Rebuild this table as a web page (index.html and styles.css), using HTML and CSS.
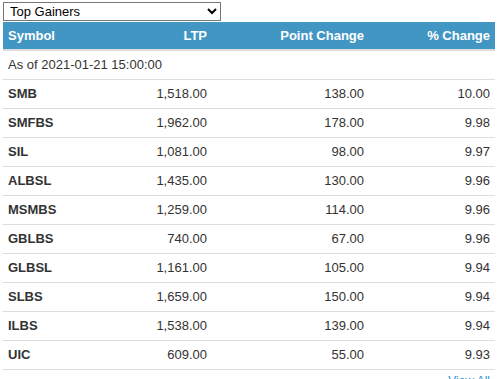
FILE: index.html
```html
<!DOCTYPE html>
<html>
<head>
<meta charset="utf-8">
<link rel="stylesheet" href="styles.css">
</head>
<body>
<div class="widget">
  <select class="picker">
    <option>Top Gainers</option>
    <option>Top Losers</option>
  </select>
  <table class="market">
    <colgroup>
      <col class="c1"><col class="c2"><col class="c3"><col class="c4">
    </colgroup>
    <thead>
      <tr><th class="left">Symbol</th><th>LTP</th><th>Point Change</th><th>% Change</th></tr>
    </thead>
    <tbody>
      <tr><td class="asof" colspan="4">As of 2021-01-21 15:00:00</td></tr>
      <tr><td class="sym">SMB</td><td>1,518.00</td><td>138.00</td><td>10.00</td></tr>
      <tr><td class="sym">SMFBS</td><td>1,962.00</td><td>178.00</td><td>9.98</td></tr>
      <tr><td class="sym">SIL</td><td>1,081.00</td><td>98.00</td><td>9.97</td></tr>
      <tr><td class="sym">ALBSL</td><td>1,435.00</td><td>130.00</td><td>9.96</td></tr>
      <tr><td class="sym">MSMBS</td><td>1,259.00</td><td>114.00</td><td>9.96</td></tr>
      <tr><td class="sym">GBLBS</td><td>740.00</td><td>67.00</td><td>9.96</td></tr>
      <tr><td class="sym">GLBSL</td><td>1,161.00</td><td>105.00</td><td>9.94</td></tr>
      <tr><td class="sym">SLBS</td><td>1,659.00</td><td>150.00</td><td>9.94</td></tr>
      <tr><td class="sym">ILBS</td><td>1,538.00</td><td>139.00</td><td>9.94</td></tr>
      <tr><td class="sym">UIC</td><td>609.00</td><td>55.00</td><td>9.93</td></tr>
    </tbody>
  </table>
  <div class="more"><a href="#">View All</a></div>
</div>
</body>
</html>
```

FILE: styles.css
```css
html, body {
  margin: 0;
  padding: 0;
  background: #fff;
}
body {
  font-family: "Liberation Sans", Arial, sans-serif;
  font-size: 13px;
  color: #333;
}
.widget {
  padding: 2px 4px 0 3px;
}
.picker {
  display: block;
  width: 218px;
  height: 19px;
  font-family: "Liberation Sans", Arial, sans-serif;
  font-size: 13px;
  color: #000;
  background: #fff;
  border: 1px solid #767676;
  border-radius: 0;
  padding: 0 0 0 2px;
  margin: 0 0 1px 0;
}
.market {
  width: 492px;
  border-collapse: collapse;
  table-layout: fixed;
}
.c1 { width: 100px; }
.c2 { width: 109px; }
.c3 { width: 157px; }
.c4 { width: 126px; }
.market th {
  background: #4296c3;
  color: #fff;
  font-weight: bold;
  text-align: right;
  padding: 4px 5px;
  line-height: 19px;
  border-bottom: 2px solid #ddd;
}
.market th.left { text-align: left; }
.market td {
  padding: 5px 5px;
  line-height: 18px;
  text-align: right;
  border-bottom: 1px solid #ddd;
  color: #333;
}
.market td.sym {
  text-align: left;
  font-weight: bold;
}
.market td.asof {
  text-align: left;
}
.more {
  text-align: right;
  padding: 2px 5px 0 0;
  line-height: 18px;
}
.more a {
  color: #2a8fd6;
  text-decoration: none;
  font-size: 12px;
}
```
